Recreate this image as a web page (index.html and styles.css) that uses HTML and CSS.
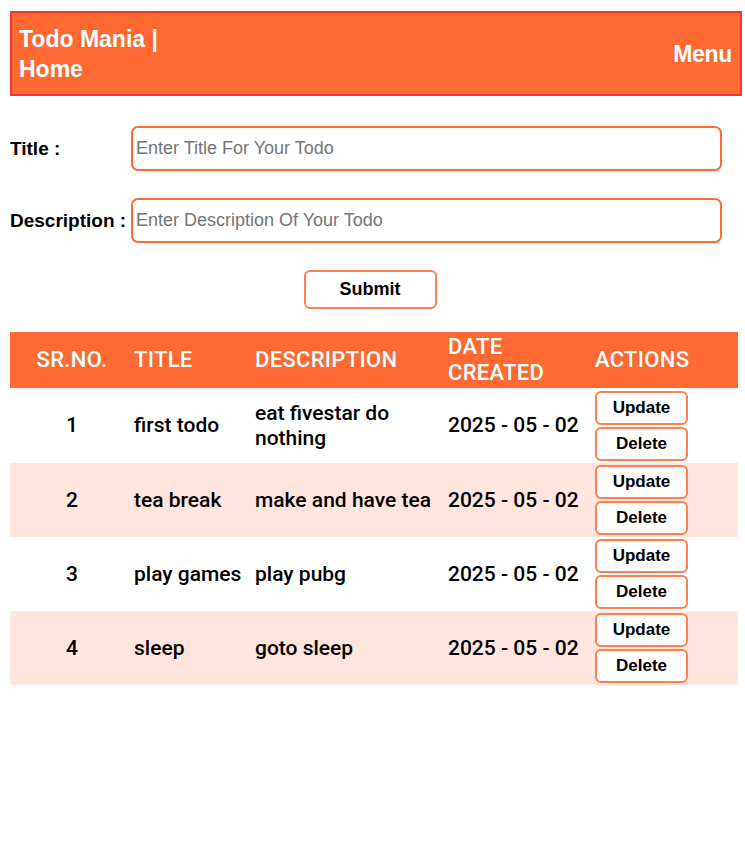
FILE: index.html
```html
<!DOCTYPE html>
<html lang="en">
<head>
<meta charset="utf-8">
<title>Todo Mania</title>
<link rel="stylesheet" href="styles.css">
</head>
<body>
<header class="topbar">
  <div class="brand">Todo Mania |<br>Home</div>
  <div class="menu">Menu</div>
</header>

<form class="todo-form">
  <div class="field">
    <label class="label" for="title">Title :</label>
    <input class="input" id="title" type="text" placeholder="Enter Title For Your Todo">
  </div>
  <div class="field">
    <label class="label" for="desc">Description :</label>
    <input class="input" id="desc" type="text" placeholder="Enter Description Of Your Todo">
  </div>
  <div class="submit-row">
    <button class="btn submit" type="button">Submit</button>
  </div>
</form>

<table class="todos">
  <colgroup>
    <col class="c-sr"><col class="c-title"><col class="c-desc"><col class="c-date"><col class="c-act">
  </colgroup>
  <thead>
    <tr>
      <th class="center">SR.NO.</th>
      <th>TITLE</th>
      <th>DESCRIPTION</th>
      <th>DATE<br>CREATED</th>
      <th>ACTIONS</th>
    </tr>
  </thead>
  <tbody>
    <tr class="first">
      <td class="center">1</td>
      <td>first todo</td>
      <td>eat fivestar do nothing</td>
      <td>2025 - 05 - 02</td>
      <td class="actions"><button class="btn small" type="button">Update</button><button class="btn small" type="button">Delete</button></td>
    </tr>
    <tr class="alt">
      <td class="center">2</td>
      <td>tea break</td>
      <td>make and have tea</td>
      <td>2025 - 05 - 02</td>
      <td class="actions"><button class="btn small" type="button">Update</button><button class="btn small" type="button">Delete</button></td>
    </tr>
    <tr>
      <td class="center">3</td>
      <td>play games</td>
      <td>play pubg</td>
      <td>2025 - 05 - 02</td>
      <td class="actions"><button class="btn small" type="button">Update</button><button class="btn small" type="button">Delete</button></td>
    </tr>
    <tr class="alt">
      <td class="center">4</td>
      <td>sleep</td>
      <td>goto sleep</td>
      <td>2025 - 05 - 02</td>
      <td class="actions"><button class="btn small" type="button">Update</button><button class="btn small" type="button">Delete</button></td>
    </tr>
  </tbody>
</table>
</body>
</html>
```

FILE: styles.css
```css
* { box-sizing: border-box; }

body {
  margin: 0;
  padding: 11px 0 0 10px;
  font-family: "Liberation Sans", Arial, sans-serif;
  color: #000;
  background: #fff;
}

.topbar {
  width: 732px;
  height: 85px;
  background: #ff6a33;
  border: 2px solid #f53333;
  display: flex;
  align-items: center;
  justify-content: space-between;
  padding: 0 8px 0 7px;
  color: #f0ffff;
  font-weight: bold;
  font-size: 23px;
}

.brand { line-height: 30px; }
.menu { font-size: 23px; line-height: 28px; letter-spacing: -0.3px; }

.todo-form {
  padding-top: 30px;
}

.field {
  display: flex;
  align-items: center;
  margin-bottom: 27px;
}

.label {
  width: 121px;
  flex: none;
  font-size: 19px;
  font-weight: bold;
  white-space: nowrap;
}

.input {
  width: 591px;
  height: 45px;
  border: 2px solid #ff6a33;
  border-radius: 7px;
  padding: 0 3px;
  font-family: "Liberation Sans", Arial, sans-serif;
  font-size: 18px;
  outline: none;
}
.input::placeholder { color: #757575; }

.submit-row {
  display: flex;
  justify-content: center;
  width: 718px;
}

.btn {
  background: #fff;
  border: 2px solid #ff7f50;
  border-radius: 6px;
  font-family: "Liberation Sans", Arial, sans-serif;
  font-weight: bold;
  color: #000;
  cursor: pointer;
}

.submit {
  width: 133px;
  height: 39px;
  font-size: 18px;
  margin-left: 2px;
}

.todos {
  margin-top: 23px;
  width: 728px;
  table-layout: fixed;
  border-collapse: collapse;
  font-family: Roboto, "Liberation Sans", sans-serif;
  font-weight: 500;
  font-size: 21px;
}

.c-sr { width: 124px; }
.c-title { width: 121px; }
.c-desc { width: 193px; }
.c-date { width: 147px; }
.c-act { width: 143px; }

.todos th {
  background: #ff6a33;
  color: #f0ffff;
  font-weight: 500;
  font-size: 22px;
  letter-spacing: 0.3px;
  text-align: left;
  height: 56px;
  line-height: 26px;
  padding: 0;
}

.todos td {
  height: 74px;
  padding: 0;
  line-height: 25px;
  vertical-align: middle;
}

.todos tr.first td { height: 75px; }

.todos .center { text-align: center; }

.todos tr.alt td { background: #ffe5de; }

.todos td.actions {
  padding: 2px 0;
}

.small {
  display: block;
  width: 93px;
  height: 34px;
  font-size: 17px;
}
.small + .small { margin-top: 2px; }
```
